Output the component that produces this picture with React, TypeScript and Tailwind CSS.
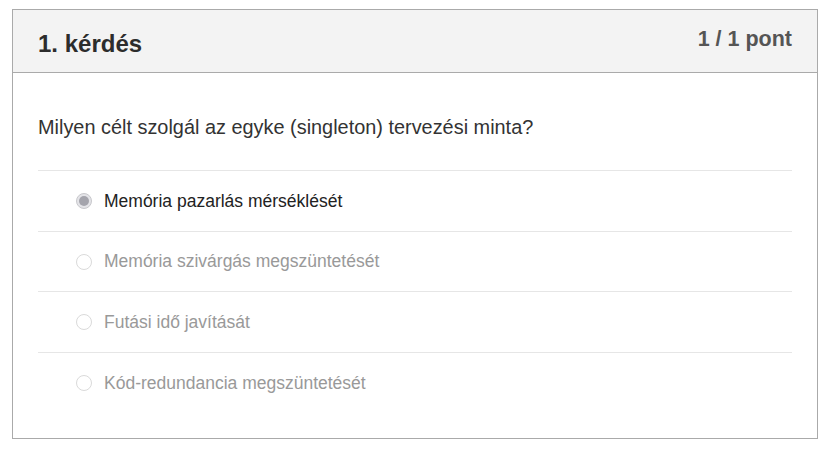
const options = [
  { text: "Memória pazarlás mérséklését", checked: true },
  { text: "Memória szivárgás megszüntetését", checked: false },
  { text: "Futási idő javítását", checked: false },
  { text: "Kód-redundancia megszüntetését", checked: false },
];

export default function App() {
  return (
    <div className="min-h-[452px] bg-white pt-[9px] pl-[12px] font-['Liberation_Sans',Arial,sans-serif]">
      <div className="w-[806px] border border-[#aaaaaa] bg-white">
        {/* header */}
        <div className="flex h-[63px] justify-between border-b border-[#aaaaaa] bg-[#f3f3f3] px-[25px]">
          <h2 className="pt-[20px] text-[24px] font-bold leading-[28px] text-[#2c2c2c]">1. kérdés</h2>
          <span className="pt-[17px] text-[21.5px] font-bold leading-[24px] text-[#555555]">1 / 1 pont</span>
        </div>

        {/* body */}
        <div className="px-[25px] pb-[25px]">
          <p className="flex h-[97px] items-center pt-[12px] text-[19.9px] text-[#333333]">
            Milyen célt szolgál az egyke (singleton) tervezési minta?
          </p>
          {options.map((o, i) => (
            <div
              key={o.text}
              className={`flex items-center border-t border-[#e6e6e6] pl-[38px] ${i === 1 ? "h-[60px]" : "h-[61px]"}`}
            >
              {o.checked ? (
                <span className="flex h-[16px] w-[16px] items-center justify-center rounded-full border border-[#c8c8cc] bg-[#e4e4e8]">
                  <span className="h-[10px] w-[10px] rounded-full bg-[#a4a4ac]" />
                </span>
              ) : (
                <span className="h-[16px] w-[16px] rounded-full border border-[#dadada] bg-white" />
              )}
              <span className={`ml-[12px] text-[17.5px] ${o.checked ? "text-[#222222]" : "text-[#999999]"}`}>{o.text}</span>
            </div>
          ))}
        </div>
      </div>
    </div>
  );
}
